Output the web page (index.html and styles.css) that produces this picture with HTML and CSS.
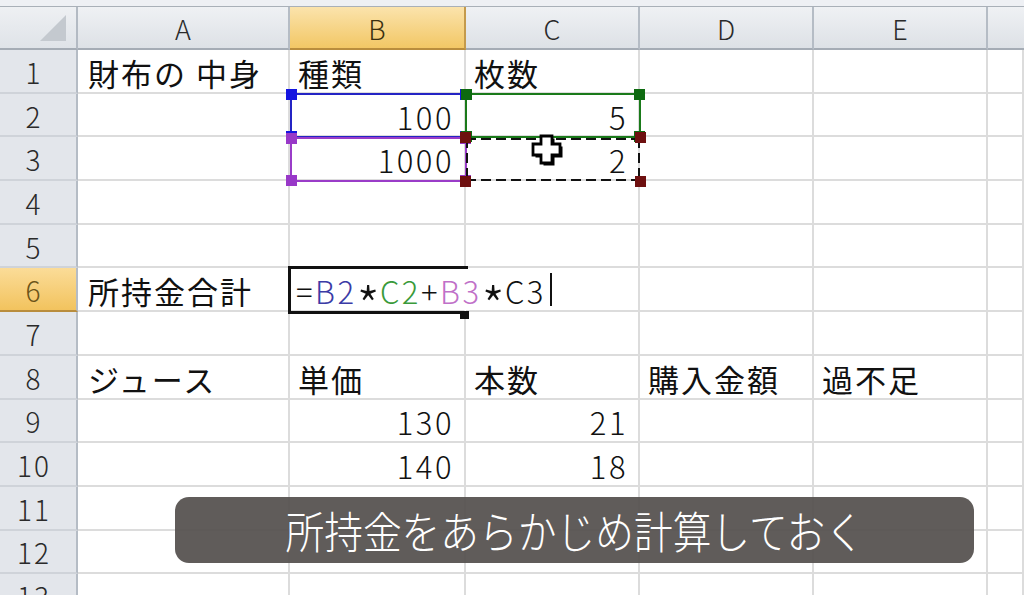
FILE: index.html
```html
<!DOCTYPE html>
<html lang="ja">
<head>
<meta charset="utf-8">
<link rel="stylesheet" href="styles.css">
</head>
<body>
<div class="stage">
  <div class="topstrip"></div>
  <div class="sheet">
    <div class="corner"><span class="tri"></span></div>
    <div class="ch">A</div><div class="ch hl">B</div><div class="ch">C</div><div class="ch">D</div><div class="ch">E</div><div class="ch last"></div>

    <div class="rh">1</div><div class="c ca">財布の 中身</div><div class="c">種類</div><div class="c">枚数</div><div class="c"></div><div class="c"></div><div class="c"></div>
    <div class="rh">2</div><div class="c"></div><div class="c num">100</div><div class="c num">5</div><div class="c"></div><div class="c"></div><div class="c"></div>
    <div class="rh">3</div><div class="c"></div><div class="c num">1000</div><div class="c num">2</div><div class="c"></div><div class="c"></div><div class="c"></div>
    <div class="rh">4</div><div class="c"></div><div class="c"></div><div class="c"></div><div class="c"></div><div class="c"></div><div class="c"></div>
    <div class="rh">5</div><div class="c"></div><div class="c"></div><div class="c"></div><div class="c"></div><div class="c"></div><div class="c"></div>
    <div class="rh hl">6</div><div class="c ca">所持金合計</div><div class="c formula"><span>=</span><span class="fb">B2</span><span class="ast">*</span><span class="fg">C2</span><span>+</span><span class="fp">B3</span><span class="ast">*</span><span>C3</span></div><div class="c"></div><div class="c"></div><div class="c"></div><div class="c"></div>
    <div class="rh">7</div><div class="c"></div><div class="c"></div><div class="c"></div><div class="c"></div><div class="c"></div><div class="c"></div>
    <div class="rh">8</div><div class="c ca">ジュース</div><div class="c">単価</div><div class="c">本数</div><div class="c">購入金額</div><div class="c">過不足</div><div class="c"></div>
    <div class="rh">9</div><div class="c"></div><div class="c num">130</div><div class="c num">21</div><div class="c"></div><div class="c"></div><div class="c"></div>
    <div class="rh">10</div><div class="c"></div><div class="c num">140</div><div class="c num">18</div><div class="c"></div><div class="c"></div><div class="c"></div>
    <div class="rh">11</div><div class="c"></div><div class="c"></div><div class="c"></div><div class="c"></div><div class="c"></div><div class="c"></div>
    <div class="rh">12</div><div class="c"></div><div class="c"></div><div class="c"></div><div class="c"></div><div class="c"></div><div class="c"></div>
    <div class="rh">13</div><div class="c"></div><div class="c"></div><div class="c"></div><div class="c"></div><div class="c"></div><div class="c"></div>
  </div>

  <div class="ref ref-b2"><i class="h tl"></i><i class="h tr"></i><i class="h bl"></i><i class="h br"></i></div>
  <div class="ref ref-c2"><i class="h tl"></i><i class="h tr"></i><i class="h bl"></i><i class="h br"></i></div>
  <div class="ref ref-b3"><i class="h tl"></i><i class="h tr"></i><i class="h bl"></i><i class="h br"></i></div>
  <div class="ref ref-c3"><i class="h tl"></i><i class="h tr"></i><i class="h bl"></i><i class="h br"></i></div>

  <svg class="cursor" width="36" height="36" viewBox="0 0 36 36">
    <path d="M11 3h11v8h8v11h-8v8h-11v-8h-8v-11h8z" fill="#000" transform="translate(2.5,2.5)"/>
    <path d="M11 3h11v8h8v11h-8v8h-11v-8h-8v-11h8z" fill="#fff" stroke="#000" stroke-width="2.8"/>
  </svg>

  <div class="active"><i class="fill"></i></div>
  <div class="caret"></div>

  <div class="caption"><span>所持金をあらかじめ計算しておく</span></div>
</div>
</body>
</html>
```

FILE: styles.css
```css
html, body {
  margin: 0;
  padding: 0;
  background: #fff;
  overflow: hidden;
}
.stage {
  position: relative;
  width: 1024px;
  height: 595px;
  overflow: hidden;
  font-family: "Noto Sans CJK JP", "Noto Sans", sans-serif;
  color: #111;
}
.topstrip {
  height: 6px;
  background: #eef0f4;
  border-bottom: 1px solid #a9b0b8;
}
.sheet {
  display: grid;
  grid-template-columns: 78px 212px 176px 174px 174px 174px 36px;
  grid-template-rows: 43px repeat(13, 43.7px);
}
.sheet > div {
  box-sizing: border-box;
}
.corner {
  background: linear-gradient(#eef0f3, #dfe3e8);
  border-right: 2px solid #b3bac3;
  border-bottom: 2px solid #a5acb5;
  position: relative;
}
.tri {
  position: absolute;
  right: 10px;
  bottom: 7px;
  width: 0;
  height: 0;
  border-left: 26px solid transparent;
  border-bottom: 26px solid #c4c9cf;
}
.ch {
  background: linear-gradient(#eff1f4, #dde1e6);
  border-right: 2px solid #b5bcc5;
  border-bottom: 2px solid #a5acb5;
  display: flex;
  align-items: center;
  justify-content: center;
  font-size: 27px;
  font-weight: 300;
  color: #2a2a2a;
  padding-top: 2px;
}
.ch.last { border-right: none; }
.ch.hl {
  background: linear-gradient(#fbe3ac, #f2c765);
  border-right-color: #c49a4c;
  border-bottom-color: #b98d3d;
  color: #3b3010;
}
.rh {
  background: #e3e6eb;
  border-right: 2px solid #b5bcc5;
  border-bottom: 2px solid #cfd3d9;
  display: flex;
  align-items: center;
  justify-content: center;
  padding-right: 8px;
  padding-top: 2px;
  font-size: 28px;
  font-weight: 300;
  color: #2a2a2a;
  letter-spacing: 2px;
}
.rh.hl {
  background: linear-gradient(#fbdc98, #f2c35e);
  border-bottom-color: #b98d3d;
  color: #6b5418;
}
.c {
  border-right: 2px solid #dcdcdc;
  border-bottom: 2px solid #dcdcdc;
  display: flex;
  align-items: center;
  padding: 3px 0 0 8px;
  font-size: 31px;
  white-space: nowrap;
  letter-spacing: 2px;
}
.c.ca { padding-left: 10px; }
.c.num {
  justify-content: flex-end;
  padding: 3px 10px 0 0;
  letter-spacing: 2.5px;
  font-weight: 300;
}
.c.formula {
  overflow: visible;
  border-right-color: transparent;
  padding-left: 6px;
  font-size: 31px;
  font-weight: 300;
  letter-spacing: 2.5px;
  position: relative;
  z-index: 1;
}
.ast {
  font-size: 1.7em;
  line-height: 1;
  transform: translateY(0.27em);
  display: inline-block;
  letter-spacing: 0;
}
.fb { color: #3b3ba6; }
.fg { color: #3a9a3a; }
.fp { color: #c070c8; }

.ref {
  position: absolute;
  box-sizing: border-box;
  border: 2px solid;
}
.ref-b2 { left: 290px; top: 93px; width: 177px; height: 45px; border-color: #2424c4; color: #1515e0; }
.ref-c2 { left: 465px; top: 93px; width: 176px; height: 45px; border-color: #1a7a1a; color: #0d6a10; }
.ref-b3 { left: 290px; top: 137px; width: 177px; height: 45px; border-color: #9a3cc8; color: #9838c8; }
.ref-c3 {
  left: 466px;
  top: 138px;
  width: 174px;
  height: 43px;
  border: none;
  color: #6e1010;
  background:
    repeating-linear-gradient(90deg, #111 0 10px, transparent 10px 15px) left top / 100% 2px no-repeat,
    repeating-linear-gradient(90deg, #111 0 10px, transparent 10px 15px) left bottom / 100% 2px no-repeat,
    repeating-linear-gradient(180deg, #111 0 10px, transparent 10px 15px) left top / 2px 100% no-repeat,
    repeating-linear-gradient(180deg, #111 0 10px, transparent 10px 15px) right top / 2px 100% no-repeat;
}
.h {
  position: absolute;
  width: 11px;
  height: 11px;
  background: currentColor;
}
.h.tl { left: -6px; top: -6px; }
.h.tr { right: -6px; top: -6px; }
.h.bl { left: -6px; bottom: -6px; }
.h.br { right: -6px; bottom: -6px; }

.cursor {
  position: absolute;
  left: 530px;
  top: 133px;
}
.active {
  position: absolute;
  left: 288px;
  top: 266px;
  width: 180px;
  height: 48px;
  box-sizing: border-box;
  border-top: 3px solid #111;
  border-left: 3px solid #111;
  z-index: 2;
}
.active::after {
  content: "";
  position: absolute;
  left: -3px;
  bottom: 0;
  width: 172px;
  height: 3px;
  background: #111;
}
.fill {
  position: absolute;
  left: 169px;
  bottom: -5px;
  width: 9px;
  height: 8px;
  background: #111;
}
.caret {
  position: absolute;
  left: 550px;
  top: 273px;
  width: 2px;
  height: 33px;
  background: #111;
  z-index: 2;
}
.caption {
  position: absolute;
  left: 175px;
  top: 497px;
  width: 799px;
  height: 66px;
  border-radius: 14px;
  background: rgba(84, 80, 77, 0.93);
  display: flex;
  align-items: center;
  justify-content: center;
  z-index: 3;
}
.caption span {
  display: inline-block;
  color: #fff;
  font-size: 44px;
  font-weight: 300;
  transform: scaleX(0.88);
  white-space: nowrap;
  line-height: 1;
}
```
